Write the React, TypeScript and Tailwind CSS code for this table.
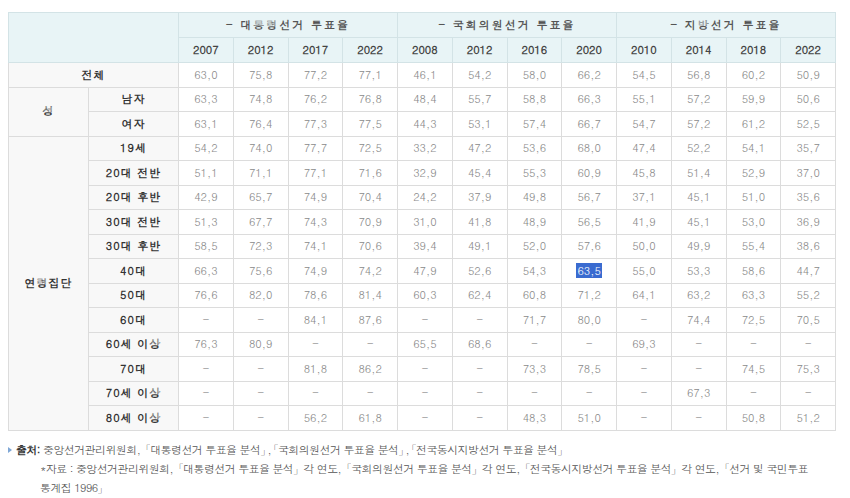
import React from 'react';

const groups = [
  { title: '- 대통령선거 투표율', years: ['2007', '2012', '2017', '2022'] },
  { title: '- 국회의원선거 투표율', years: ['2008', '2012', '2016', '2020'] },
  { title: '- 지방선거 투표율', years: ['2010', '2014', '2018', '2022'] },
];

const ageRows: [string, string[]][] = [
  ['19세', ['54,2', '74,0', '77,7', '72,5', '33,2', '47,2', '53,6', '68,0', '47,4', '52,2', '54,1', '35,7']],
  ['20대 전반', ['51,1', '71,1', '77,1', '71,6', '32,9', '45,4', '55,3', '60,9', '45,8', '51,4', '52,9', '37,0']],
  ['20대 후반', ['42,9', '65,7', '74,9', '70,4', '24,2', '37,9', '49,8', '56,7', '37,1', '45,1', '51,0', '35,6']],
  ['30대 전반', ['51,3', '67,7', '74,3', '70,9', '31,0', '41,8', '48,9', '56,5', '41,9', '45,1', '53,0', '36,9']],
  ['30대 후반', ['58,5', '72,3', '74,1', '70,6', '39,4', '49,1', '52,0', '57,6', '50,0', '49,9', '55,4', '38,6']],
  ['40대', ['66,3', '75,6', '74,9', '74,2', '47,9', '52,6', '54,3', '63,5', '55,0', '53,3', '58,6', '44,7']],
  ['50대', ['76,6', '82,0', '78,6', '81,4', '60,3', '62,4', '60,8', '71,2', '64,1', '63,2', '63,3', '55,2']],
  ['60대', ['-', '-', '84,1', '87,6', '-', '-', '71,7', '80,0', '-', '74,4', '72,5', '70,5']],
  ['60세 이상', ['76,3', '80,9', '-', '-', '65,5', '68,6', '-', '-', '69,3', '-', '-', '-']],
  ['70대', ['-', '-', '81,8', '86,2', '-', '-', '73,3', '78,5', '-', '-', '74,5', '75,3']],
  ['70세 이상', ['-', '-', '-', '-', '-', '-', '-', '-', '-', '67,3', '-', '-']],
  ['80세 이상', ['-', '-', '56,2', '61,8', '-', '-', '48,3', '51,0', '-', '-', '50,8', '51,2']],
];

const total = ['63,0', '75,8', '77,2', '77,1', '46,1', '54,2', '58,0', '66,2', '54,5', '56,8', '60,2', '50,9'];
const male = ['63,3', '74,8', '76,2', '76,8', '48,4', '55,7', '58,8', '66,3', '55,1', '57,2', '59,9', '50,6'];
const female = ['63,1', '76,4', '77,3', '77,5', '44,3', '53,1', '57,4', '66,7', '54,7', '57,2', '61,2', '52,5'];

const font = "font-['Dotum','Noto_Sans_CJK_KR',sans-serif]";
const td = 'border border-[#dcdcdc] text-center text-[11px] text-[#8a8a8a] h-[24.5px] p-0';
const th = 'border border-[#dcdcdc] bg-[#f8f8f8] text-center text-[11px] font-bold text-[#333] p-0 tracking-[1px]';
const hd = 'border border-[#d3e3e6] bg-[#e8f4f6] text-center text-[11px] font-bold text-[#444] p-0 h-[25px]';

const Cells = ({ values, hl }: { values: string[]; hl?: number }) => (
  <>
    {values.map((v, i) => (
      <td key={i} className={td}>
        {i === hl ? <span className="bg-[#3a6bd0] text-white px-[1px]">{v}</span> : v}
      </td>
    ))}
  </>
);

// 낫표: 전각 여백을 잘라서 반각처럼 표시
const Open = () => <span className="inline-flex justify-end w-[7px] overflow-hidden">「</span>;
const Close = () => <span className="inline-flex w-[7px] overflow-hidden">」</span>;
const Q = ({ children }: { children: React.ReactNode }) => (
  <>
    <Open />
    {children}
    <Close />
  </>
);

export default function App() {
  return (
    <div className={`${font} bg-white w-[850px] h-[498px] pt-[12px] pl-[8px]`}>
      <table className="table-fixed border-collapse w-[828px]">
        <colgroup>
          <col className="w-[80px]" />
          <col className="w-[90px]" />
          {Array.from({ length: 12 }).map((_, i) => (
            <col key={i} />
          ))}
        </colgroup>
        <thead>
          <tr>
            <th className={hd} colSpan={2} rowSpan={2}></th>
            {groups.map((g) => (
              <th key={g.title} className={`${hd} tracking-[2px] text-[#555]`} colSpan={4}>
                {g.title}
              </th>
            ))}
          </tr>
          <tr>
            {groups.flatMap((g) =>
              g.years.map((y, i) => (
                <th key={g.title + i} className={hd}>
                  {y}
                </th>
              ))
            )}
          </tr>
        </thead>
        <tbody>
          <tr>
            <th className={th} colSpan={2}>전체</th>
            <Cells values={total} />
          </tr>
          <tr>
            <th className={th} rowSpan={2}>성</th>
            <th className={th}>남자</th>
            <Cells values={male} />
          </tr>
          <tr>
            <th className={th}>여자</th>
            <Cells values={female} />
          </tr>
          {ageRows.map(([label, vals], idx) => (
            <tr key={label}>
              {idx === 0 && (
                <th className={th} rowSpan={ageRows.length}>
                  연령집단
                </th>
              )}
              <th className={th}>{label}</th>
              <Cells values={vals} hl={label === '40대' ? 7 : undefined} />
            </tr>
          ))}
        </tbody>
      </table>
      <div className="mt-[9px] text-[11px] leading-[19px] text-[#555] tracking-[-0.6px]">
        <div className="whitespace-nowrap">
          <span className="inline-block align-middle w-0 h-0 border-y-[3px] border-y-transparent border-l-[4px] border-l-[#7fa7d6] mr-[4px] mb-[2px]" />
          <span className="font-bold text-[#333]">출처:</span> 중앙선거관리위원회, <Q>대통령선거 투표율 분석</Q>,<Q>국회의원선거 투표율 분석</Q>,<Q>전국동시지방선거 투표율 분석</Q>
        </div>
        <div className="pl-[32px] w-[814px] break-keep">
          *자료 : 중앙선거관리위원회, <Q>대통령선거 투표율 분석</Q> 각 연도, <Q>국회의원선거 투표율 분석</Q> 각 연도, <Q>전국동시지방선거 투표율 분석</Q> 각 연도, <Open />선거 및 국민투표 통계집 1996<Close />
        </div>
      </div>
    </div>
  );
}
